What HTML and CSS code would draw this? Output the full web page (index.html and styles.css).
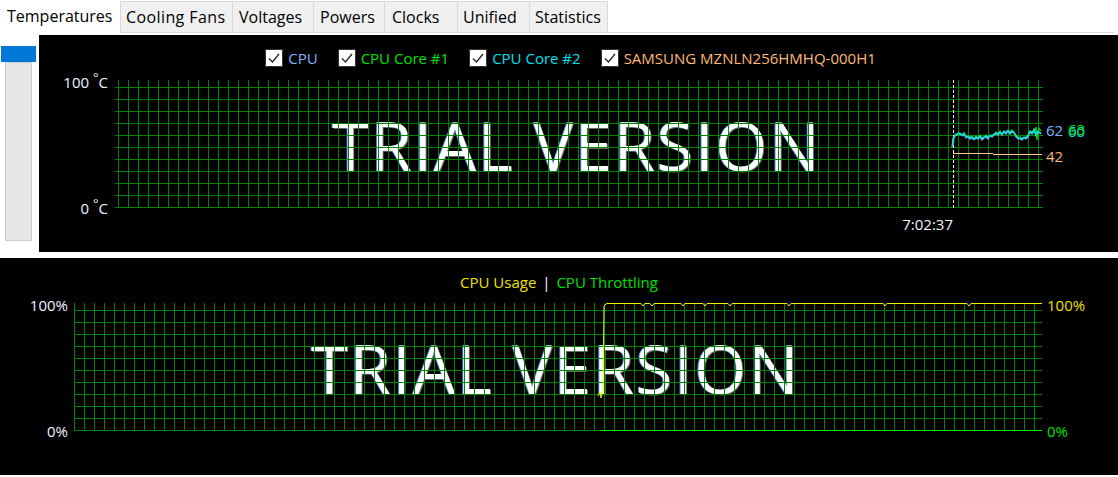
FILE: index.html
```html
<!DOCTYPE html>
<html lang="en">
<head>
<meta charset="utf-8">
<title>Temperatures</title>
<link rel="stylesheet" href="styles.css">
</head>
<body>
<div class="tabs">
  <div class="tab active">Temperatures</div>
  <div class="tab w-fans">Cooling Fans</div>
  <div class="tab w-volt">Voltages</div>
  <div class="tab w-pow">Powers</div>
  <div class="tab w-clk">Clocks</div>
  <div class="tab w-uni">Unified</div>
  <div class="tab w-stat last">Statistics</div>
  <div class="tab-fill"></div>
</div>

<div class="top-row">
  <div class="slider">
    <div class="thumb"></div>
    <div class="track"></div>
  </div>
  <div class="panel temp-panel">
    <div class="legend">
      <div class="legend-item c-cpu"><span class="cb"><svg width="16" height="16" viewBox="0 0 16 16"><path d="M3 8.5l3.5 3.5L13 4" fill="none" stroke="#222" stroke-width="1.3"/></svg></span>CPU</div>
      <div class="legend-item c-core1"><span class="cb"><svg width="16" height="16" viewBox="0 0 16 16"><path d="M3 8.5l3.5 3.5L13 4" fill="none" stroke="#222" stroke-width="1.3"/></svg></span>CPU Core #1</div>
      <div class="legend-item c-core2"><span class="cb"><svg width="16" height="16" viewBox="0 0 16 16"><path d="M3 8.5l3.5 3.5L13 4" fill="none" stroke="#222" stroke-width="1.3"/></svg></span>CPU Core #2</div>
      <div class="legend-item c-ssd"><span class="cb"><svg width="16" height="16" viewBox="0 0 16 16"><path d="M3 8.5l3.5 3.5L13 4" fill="none" stroke="#222" stroke-width="1.3"/></svg></span>SAMSUNG MZNLN256HMHQ-000H1</div>
    </div>
    <div class="chart temp-chart">
      <div class="yaxis left">
        <span>100 <span class="deg">°</span>C</span>
        <span>0 <span class="deg">°</span>C</span>
      </div>
      <div class="plot">
        <div class="wm">TRIAL VERSION</div>
        <svg class="grid" width="928" height="128" viewBox="0 0 928 128">
          <defs>
            <pattern id="tv" width="10" height="128" patternUnits="userSpaceOnUse"><rect x="3" y="0" width="1" height="128" fill="#008400"/></pattern>
            <pattern id="th" width="928" height="12" patternUnits="userSpaceOnUse"><rect x="0" y="7" width="928" height="1" fill="#008400"/></pattern>
          </defs>
          <rect width="928" height="128" fill="url(#tv)"/>
          <rect width="928" height="128" fill="url(#th)"/>
          <line x1="838.5" y1="0" x2="838.5" y2="128" stroke="#fff" stroke-dasharray="3 2"/>
          <path d="M838 73.5H878M878 74.5H927" fill="none" stroke="#ffc88c"/>
          <polyline fill="none" stroke="#8ab4ff" stroke-width="1.2" points="837,67 838,58 840,56 842,55 844,54 846,55 848,56 849,54 851,58 853,57 855,59 857,58 859,60 861,58 863,59 865,57 867,60 869,58 871,57 873,59 875,56 877,57 879,55 881,54 883,55 885,53 887,55 889,52 891,54 893,51 895,54 897,52 899,53 901,57 903,59 905,59 907,60 909,58 911,59 913,57 915,52 917,54 919,50 921,56 923,52 926,54"/>
          <polyline fill="none" stroke="#00e000" stroke-width="1.2" points="838,62 839,57 841,54 843,55 845,53 847,55 849,53 851,56 853,57 855,57 857,56 859,59 861,56 863,58 865,55 867,58 869,57 871,55 873,57 875,56 877,55 879,55 881,52 883,54 885,51 887,54 889,52 891,52 893,51 895,52 897,50 899,53 901,55 903,58 905,57 907,58 909,58 911,57 913,55 915,51 917,52 919,53 921,47 922,60 924,48 926,51"/>
          <polyline fill="none" stroke="#00e0ff" stroke-width="1.2" points="838,66 839,58 840,55 842,54 844,53 846,54 848,55 849,53 851,57 853,56 855,58 857,57 859,59 861,57 863,58 865,56 867,59 869,57 871,56 873,58 875,55 877,56 879,54 881,53 883,54 885,52 887,54 889,51 891,53 893,50 895,53 897,51 899,52 901,56 903,58 905,58 907,59 909,57 911,58 913,56 915,51 917,53 919,49 921,55 923,51 926,53"/>
        </svg>
      </div>
      <div class="yaxis right-values">
        <span class="val v62 c-cpu">62</span>
        <span class="val v60 c-core2">60</span>
        <span class="val v63 c-core1">63</span>
        <span class="val v42 c-ssd">42</span>
      </div>
    </div>
    <div class="time-row">
      <div></div>
      <div class="time-label">7:02:37</div>
    </div>
  </div>
</div>

<div class="panel usage-panel">
  <div class="title"><span class="c-usage">CPU Usage</span> <span class="sep">|</span> <span class="c-thr">CPU Throttling</span></div>
  <div class="chart usage-chart">
    <div class="yaxis left">
      <span>100%</span>
      <span>0%</span>
    </div>
    <div class="plot">
      <div class="wm">TRIAL VERSION</div>
      <svg class="grid" width="968" height="128" viewBox="0 0 968 128">
        <defs>
          <pattern id="bv" width="10" height="128" patternUnits="userSpaceOnUse"><rect x="0" y="0" width="1" height="128" fill="#008400"/></pattern>
          <pattern id="bh" width="968" height="12" patternUnits="userSpaceOnUse"><rect x="0" y="7" width="968" height="1" fill="#008400"/></pattern>
        </defs>
        <rect width="968" height="128" fill="url(#bv)"/>
        <rect width="968" height="128" fill="url(#bh)"/>
        <path d="M526 127.5H968" fill="none" stroke="#00f000"/>
        <polyline fill="none" stroke="#f0f000" points="524,93 526,89 527,95 528,91 529,87 530,3 532,1 533,0.5 567,0.5 569,3 571,0.5 576,0.5 578,3 580,0.5 607,0.5 609,3 611,0.5 629,0.5 631,3 633,0.5 654,0.5 656,3 658,0.5 713,0.5 715,3 717,0.5 809,0.5 811,3 813,0.5 893,0.5 895,3 897,0.5 968,0.5"/>
      </svg>
    </div>
    <div class="yaxis right">
      <span class="c-usage">100%</span>
      <span class="c-thr">0%</span>
    </div>
  </div>
</div>
</body>
</html>
```
FILE: styles.css
```css
* { box-sizing: border-box; }
html, body { margin: 0; padding: 0; background: #fff; }
body {
  width: 1118px;
  height: 477px;
  overflow: hidden;
  font-family: "Open Sans", "Noto Sans", sans-serif;
}

/* tabs */
.tabs { display: flex; height: 33px; font-size: 16px; line-height: 22px; color: #000; }
.tab {
  flex: none;
  height: 32px;
  margin-top: 1px;
  padding: 4px 0 0 5px;
  border: 1px solid #d9d9d9;
  border-right: none;
  background: #f0f0f0;
  white-space: nowrap;
  overflow: hidden;
}
.tab.active { width: 120px; height: 33px; margin-top: 0; padding: 5px 0 0 7px; border: none; background: #fff; }
.tab.last { border-right: 1px solid #d9d9d9; }
.w-fans { width: 112px; letter-spacing: 0.4px; }
.w-volt { width: 81px; padding-left: 6px; }
.w-pow { width: 71px; padding-left: 6px; }
.w-clk { width: 73px; padding-left: 7px; }
.w-uni { width: 72px; }
.w-stat { width: 79px; }
.tab-fill { flex: 1; height: 33px; border-bottom: 1px solid #d9d9d9; margin-right: 4px; }

/* top row */
.top-row { display: flex; margin-top: 2px; height: 217px; }
.slider { width: 39px; flex: none; display: flex; flex-direction: column; }
.thumb { margin: 11px 0 0 1px; width: 35px; height: 16px; background: #0078d7; }
.track { margin-left: 5px; width: 27px; height: 179px; background: #e6e7e8; border: 1px solid #cccccc; }

.panel { background: #000; color: #eef3ff; font-size: 15px; }
.temp-panel { flex: 1; display: flex; flex-direction: column; }

/* legend */
.legend {
  height: 45px;
  padding: 14px 16px 0 0;
  display: flex;
  justify-content: center;
  gap: 20px;
}
.legend-item { display: flex; align-items: center; height: 18px; line-height: 20px; white-space: nowrap; }
.cb { width: 18px; height: 18px; flex: none; background: #fff; border: 1px solid #333; margin-right: 5px; display: flex; }
.c-cpu { color: #80b4ff; }
.c-core1 { color: #00e000; }
.c-core2 { color: #00e0f0; }
.c-ssd { color: #ffb878; }

/* chart */
.chart { display: grid; height: 128px; }
.temp-chart { grid-template-columns: 76px 928px 1fr; }
.usage-chart { grid-template-columns: 74px 968px 1fr; }

.yaxis { display: flex; flex-direction: column; justify-content: space-between; margin: -6px 0 -8px; line-height: 16px; white-space: nowrap; }
.yaxis.left { align-items: flex-end; padding-right: 7px; }
.usage-chart .yaxis.left { padding-right: 6px; }
.yaxis.right { align-items: flex-start; padding-left: 5px; }
.deg { font-size: 13px; vertical-align: 6px; line-height: 0; }

.right-values { position: relative; margin: 0; }
.val { position: absolute; line-height: 16px; }
.v62 { left: 3px; top: 42px; }
.v63 { left: 25px; top: 41px; }
.v60 { left: 25px; top: 43px; }
.v42 { left: 3px; top: 68px; }

.plot { display: grid; }
.plot > * { grid-area: 1 / 1; }
.grid { display: block; }
.wm {
  display: flex;
  align-items: center;
  justify-content: center;
  padding-right: 5px;
  padding-top: 2px;
  font-size: 67px;
  line-height: 67px;
  letter-spacing: 1.6px;
  color: #fff;
  white-space: nowrap;
  text-shadow: -1px 0 0 rgba(70, 150, 255, 0.9), 1px 1px 0 rgba(130, 130, 130, 0.8);
}

.time-row { display: grid; grid-template-columns: 76px 928px 1fr; padding-top: 7px; }
.time-label { width: 838px; text-align: right; line-height: 18px; }

/* bottom panel */
.usage-panel { margin-top: 6px; height: 217px; display: flex; flex-direction: column; }
.title { height: 45px; padding-top: 14px; text-align: center; line-height: 20px; }
.c-usage { color: #f0e000; }
.c-thr { color: #00e000; }
.sep { color: #fff; padding: 0 2px; }
```
